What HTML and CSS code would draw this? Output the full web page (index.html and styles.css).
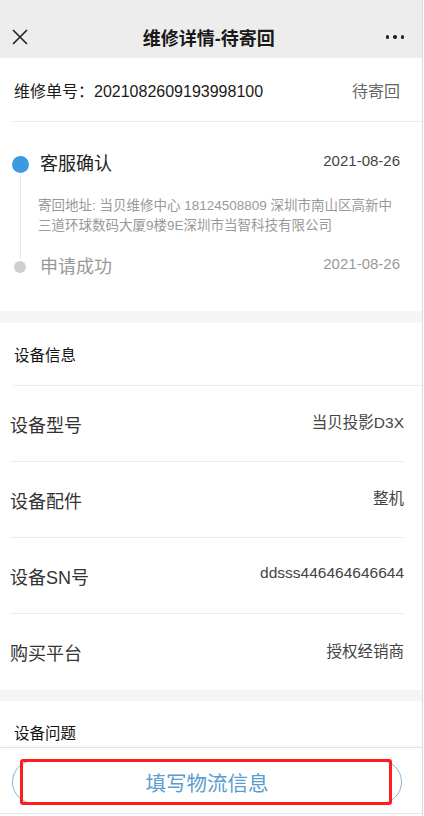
FILE: index.html
```html
<!DOCTYPE html>
<html lang="zh-CN">
<head>
  <meta charset="UTF-8">
  <meta name="viewport" content="width=device-width, initial-scale=1.0">
  <title>维修详情-待寄回</title>
  <link rel="stylesheet" href="styles.css">
</head>
<body>
  <div class="page">
    <div class="nav-bar">
      <svg class="nav-close" width="16" height="16" viewBox="0 0 16 16">
        <path d="M1 1 L15 15 M15 1 L1 15" stroke="#222" stroke-width="1.6" fill="none"/>
      </svg>
      <div class="nav-title">维修详情-待寄回</div>
      <div class="nav-more"><span></span><span></span><span></span></div>
    </div>

    <div class="section">
      <div class="order-row">
        <span>维修单号：2021082609193998100</span>
        <span class="order-status">待寄回</span>
      </div>

      <div class="timeline">
        <div class="step">
          <div class="step-axis">
            <span class="dot dot-active"></span>
            <span class="axis-line"></span>
          </div>
          <div class="step-body">
            <div class="step-head">
              <span class="step-title">客服确认</span>
              <span class="step-date">2021-08-26</span>
            </div>
            <div class="step-desc">寄回地址: 当贝维修中心 18124508809 深圳市南山区高新中三道环球数码大厦9楼9E深圳市当智科技有限公司</div>
          </div>
        </div>
        <div class="step step-done">
          <div class="step-axis">
            <span class="dot"></span>
          </div>
          <div class="step-body">
            <div class="step-head">
              <span class="step-title">申请成功</span>
              <span class="step-date">2021-08-26</span>
            </div>
          </div>
        </div>
      </div>
    </div>

    <div class="section">
      <div class="section-title title-line">设备信息</div>
      <div class="info-row"><span class="info-label">设备型号</span><span class="info-value">当贝投影D3X</span></div>
      <div class="info-row"><span class="info-label">设备配件</span><span class="info-value">整机</span></div>
      <div class="info-row"><span class="info-label">设备SN号</span><span class="info-value">ddsss446464646644</span></div>
      <div class="info-row"><span class="info-label">购买平台</span><span class="info-value">授权经销商</span></div>
    </div>

    <div class="section">
      <div class="section-title">设备问题</div>
      <div class="spacer"></div>
    </div>

    <div class="bottom-bar">
      <button type="button" class="btn-outline">填写物流信息</button>
      <div class="mark-box"></div>
    </div>
  </div>
</body>
</html>
```

FILE: styles.css
```css
body { margin: 0; background: #fff; font-family: "Liberation Sans", "Noto Sans CJK SC", sans-serif; color: #333; }
.page { width: 422px; min-height: 816px; border-right: 1px solid #dcdcdc; background: #f5f5f5; }

.nav-bar { height: 42px; padding: 16px 18px 0 12px; background: #ededed; display: flex; align-items: center; justify-content: space-between; }
.nav-close { display: block; }
.nav-title { font-size: 18px; font-weight: bold; color: #1a1a1a; margin-left: 4px; }
.nav-more { display: flex; gap: 4px; }
.nav-more span { width: 3.5px; height: 3.5px; border-radius: 50%; background: #222; }

.section { background: #fff; margin-bottom: 12px; }
.section:nth-child(3) { margin-bottom: 11px; }

.order-row { height: 63px; margin-left: 12px; padding: 0 22px 0 2px; border-bottom: 1px solid #ececec; display: flex; align-items: center; justify-content: space-between; font-size: 16px; color: #1a1a1a; }
.order-status { color: #666; }

.timeline { padding: 30px 22px 32px 10px; }
.step { display: flex; }
.step-axis { width: 20px; display: flex; flex-direction: column; align-items: center; }
.dot { width: 12px; height: 12px; margin-top: 6px; border-radius: 50%; background: #cfcfcf; flex-shrink: 0; }
.dot-active { width: 17px; height: 17px; margin-top: 4px; background: #3e9ae0; }
.axis-line { flex: 1; width: 1px; margin: 3px 0 -4px; background: #e6e6e6; }
.step-body { flex: 1; margin-left: 10px; padding-bottom: 19px; }
.step-done .step-body { padding-bottom: 0; }
.step-head { display: flex; justify-content: space-between; align-items: flex-start; }
.step-title { font-size: 18px; line-height: 24px; color: #222; }
.step-date { font-size: 15px; line-height: 18px; color: #444; }
.step-done .step-title, .step-done .step-date { color: #999; }
.step-desc { margin: 20px 0 0 -2px; font-size: 13.5px; line-height: 20px; color: #999; }

.section-title { height: 62px; margin-left: 13px; padding-left: 1px; display: flex; align-items: center; font-size: 15.5px; color: #111; }
.title-line { border-bottom: 1px solid #ececec; }
.info-row { height: 75px; margin: 0 18px 0 10px; border-bottom: 1px solid #ececec; display: flex; align-items: center; justify-content: space-between; }
.info-row:last-child { height: 76px; border-bottom: none; }
.info-label { font-size: 18px; color: #333; }
.info-value { font-size: 15.5px; color: #444; margin-bottom: 5px; }
.spacer { height: 80px; }

.bottom-bar { position: fixed; left: 0; bottom: 2px; width: 422px; height: 67px; padding-top: 12px; border-top: 1px solid #e2e2e2; border-bottom: 1px solid #e6e6e6; background: #fff; box-sizing: border-box; box-shadow: 0 -1px 3px rgba(0, 0, 0, 0.03); }
.btn-outline { display: block; width: 390px; height: 44px; margin-left: 12px; border: 1px solid #86b6d4; border-radius: 22px; background: #fff; font-family: inherit; font-size: 20.5px; color: #5a9dcc; }
.mark-box { position: absolute; left: 20px; top: 11px; width: 372px; height: 46px; border: 3px solid #ff1c1c; border-radius: 3px; box-sizing: border-box; }
```
